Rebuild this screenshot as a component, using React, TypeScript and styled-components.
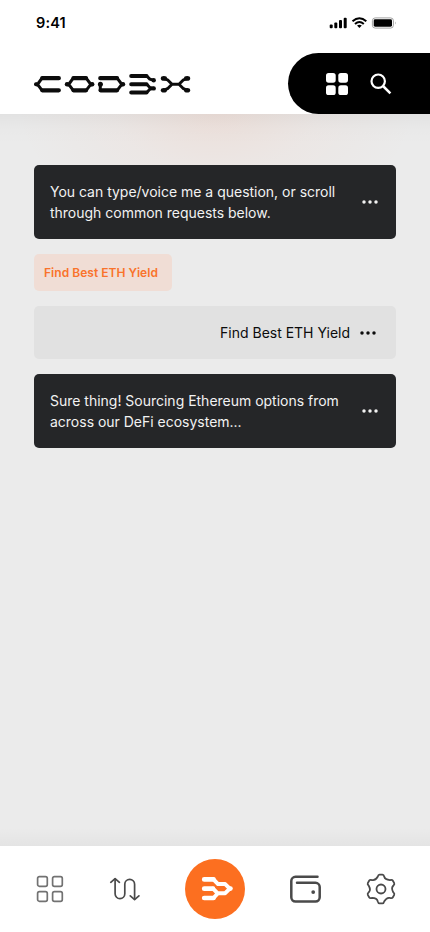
import React from "react";
import styled, { createGlobalStyle, css } from "styled-components";

const GlobalStyle = createGlobalStyle`
  *, *::before, *::after { box-sizing: border-box; }
  body { margin: 0; background: #ebebeb; font-family: Inter, "Liberation Sans", sans-serif; }
  button { border: 0; padding: 0; background: none; font: inherit; color: inherit; }
  svg { display: block; flex: none; }
`;

const Screen = styled.div`
  width: 430px;
  height: 932px;
  display: flex;
  flex-direction: column;
  overflow: hidden;
`;

const Header = styled.header`
  height: 114px;
  flex: none;
  background: #fff;
  display: flex;
  flex-direction: column;
`;

const StatusBar = styled.div`
  height: 53px;
  padding: 14px 33px 0 36px;
  display: flex;
  justify-content: space-between;
`;

const Time = styled.span`
  font-size: 14.5px;
  line-height: 18px;
  font-weight: 600;
  letter-spacing: 0.15px;
  color: #000;
`;

const Brand = styled.div`
  height: 61px;
  padding-left: 30px;
  display: flex;
  justify-content: space-between;
  align-items: center;
`;

const Actions = styled.div`
  width: 142px;
  height: 61px;
  padding-left: 38px;
  display: flex;
  align-items: center;
  gap: 22px;
  background: #000;
  border-radius: 31px 0 0 31px;
`;

const Chat = styled.main`
  flex: 1;
  padding: 51px 34px 0;
  display: flex;
  flex-direction: column;
  align-items: flex-start;
  gap: 15px;
  background:
    linear-gradient(rgba(0, 0, 0, 0.04), rgba(0, 0, 0, 0.012) 13px, transparent 30px),
    linear-gradient(transparent calc(100% - 18px), rgba(0, 0, 0, 0.03)),
    radial-gradient(ellipse 200px 120px at 216px -4px, rgba(255, 115, 60, 0.1), rgba(255, 115, 60, 0.035) 50%, transparent),
    #ebebeb;
`;

const Message = styled.article<{ $own?: boolean }>`
  width: 362px;
  height: 74px;
  padding: 0 18px 0 16px;
  display: flex;
  align-items: center;
  justify-content: space-between;
  border-radius: 5px;
  background: #252628;
  color: #f2f2f2;
  ${(p) =>
    p.$own &&
    css`
      height: 53px;
      padding-right: 20px;
      justify-content: flex-end;
      gap: 10px;
      background: #e1e1e1;
      color: #0c0c0c;
    `}
`;

const MessageText = styled.p`
  margin: 0;
  font-size: 14px;
  font-weight: 400;
  line-height: 21px;
  letter-spacing: -0.01px;
  white-space: nowrap;
`;

const Suggestion = styled.button`
  width: 138px;
  height: 37px;
  padding-left: 10px;
  text-align: left;
  border-radius: 5px;
  background: #f0ddd5;
  color: #f9732b;
  font-size: 12px;
  font-weight: 600;
  letter-spacing: 0.04px;
  white-space: nowrap;
`;

const TabBar = styled.nav`
  height: 86px;
  flex: none;
  padding: 0 33px 0 36px;
  display: flex;
  align-items: center;
  justify-content: space-between;
  background: #fff;
  color: #4a4a4a;
`;

const HomeButton = styled.button`
  width: 60px;
  height: 60px;
  display: flex;
  align-items: center;
  justify-content: center;
  padding-left: 4px;
  border-radius: 50%;
  background: #fc6f20;
`;

const StatusIcons = () => (
  <svg width="70" height="18" viewBox="327 14 70 18">
    <g fill="#000">
      <rect x="329.7" y="24.4" width="3" height="3.8" rx="1" />
      <rect x="334.3" y="22.5" width="3" height="5.7" rx="1" />
      <rect x="339" y="20" width="3" height="8.2" rx="1" />
      <rect x="343.7" y="17.7" width="3" height="10.5" rx="1" />
      <rect x="373.7" y="19.3" width="18.3" height="7.4" rx="1.4" />
      <path d="M357 25.5 359.4 28 361.8 25.5Q359.4 23.8 357 25.5Z" />
    </g>
    <g fill="none" stroke="#000" strokeWidth="2">
      <path d="M352.5 21.3Q359.4 15.3 366.3 21.3" />
      <path d="M355 24Q359.4 20 363.8 24" />
    </g>
    <rect x="372.4" y="17.9" width="21" height="10.2" rx="2.8" fill="none" stroke="#999" strokeWidth=".9" />
    <path d="M395 21.4v3.2q1.4-1.6 0-3.2" fill="#999" />
  </svg>
);

const Logo = () => (
  <svg width="165" height="28" viewBox="30 70 165 28" role="img" aria-label="Codex">
    <g fill="none" stroke="#0c0c0c" strokeLinecap="round" strokeLinejoin="round">
      <g strokeWidth="4.3">
        <path d="M42.3 78.2H58.8M42.3 90.3H58.8M73.5 78.2H86M73.5 90.3H86" />
        <path d="M100.3 78.2H117M100.6 90.3H117" />
        <path d="M131.2 76H146.5M131.2 84.3H146.5M131.2 92.5H146.5" strokeWidth="4" />
      </g>
      <g strokeWidth="3">
        <path d="M42 78.2 38.5 83 36 84.3 38.5 85.6 42 90.4" />
        <path d="M73.2 78.2 69.7 83 67 84.3 69.7 85.6 73.2 90.4" />
        <path d="M86.2 78.2 89.8 83 92.3 84.3 89.8 85.6 86.2 90.4" />
        <path d="M117.2 78.2 120.8 83 123.2 84.3 120.8 85.6 117.2 90.4" />
        <path d="M100.3 84.5V90.3" />
        <path d="M146.8 76 149.8 79.1 153.6 80.2M146.8 84.3 149.8 87.5 153.6 88.3M146.8 92.5 149.8 89.2 153.6 88.3" />
        <path d="M163.7 78.3 167.5 79.8 172 84.3 167.5 88.7 163.7 90.3M187.4 78.3 183.5 79.8 179 84.3 183.5 88.7 187.4 90.3M172 84.3H179" />
      </g>
    </g>
    <g fill="#0c0c0c">
      <circle cx="36" cy="84.3" r="2" />
      <circle cx="67" cy="84.3" r="2.2" />
      <circle cx="92.2" cy="84.3" r="2.2" />
      <circle cx="123" cy="84.3" r="2.2" />
      <circle cx="100.4" cy="84.3" r="2.5" />
      <circle cx="153.7" cy="80.2" r="2.2" />
      <circle cx="153.7" cy="88.4" r="2.2" />
      <ellipse cx="163.9" cy="78.4" rx="3.1" ry="2.3" />
      <ellipse cx="163.9" cy="90.2" rx="3.1" ry="2.3" />
      <ellipse cx="187.1" cy="78.4" rx="3.1" ry="2.3" />
      <ellipse cx="187.1" cy="90.2" rx="3.1" ry="2.3" />
    </g>
  </svg>
);

const AppsSolid = () => (
  <svg width="22" height="22" viewBox="0 0 22 22" fill="#fff">
    <rect width="9.7" height="9.7" rx="2.6" />
    <rect x="12.3" width="9.7" height="9.7" rx="2.6" />
    <rect y="12.3" width="9.7" height="9.7" rx="2.6" />
    <rect x="12.3" y="12.3" width="9.7" height="9.7" rx="2.6" />
  </svg>
);

const Search = () => (
  <svg width="22" height="22" viewBox="0 0 22 22" fill="none" stroke="#fff" strokeWidth="2.2">
    <circle cx="8.2" cy="8.2" r="6.7" />
    <path d="M13 13 20.4 20.4" strokeWidth="2.5" />
  </svg>
);

const Dots = () => (
  <svg width="16" height="4" viewBox="0 0 16 4" fill="currentColor">
    <circle cx="2" cy="2" r="1.75" />
    <circle cx="8" cy="2" r="1.75" />
    <circle cx="14" cy="2" r="1.75" />
  </svg>
);

const AppsOutline = () => (
  <svg width="28" height="28" viewBox="0 0 28 28" fill="none" stroke="#727272" strokeWidth="1.7">
    <rect x="1.6" y="1.6" width="9.7" height="9.7" rx="1.8" />
    <rect x="16.6" y="1.6" width="9.7" height="9.7" rx="1.8" />
    <rect x="1.6" y="16.6" width="9.7" height="9.7" rx="1.8" />
    <rect x="16.6" y="16.6" width="9.7" height="9.7" rx="1.8" />
  </svg>
);

const Swap = () => (
  <svg width="32" height="26" viewBox="108.2 876 32 26" fill="none" stroke="currentColor" strokeWidth="1.7" strokeLinecap="round" strokeLinejoin="round">
    <path d="M115.3 879V893.8a4.85 4.85 0 0 0 9.7 0V884.2a4.9 4.9 0 0 1 9.8 0V899" />
    <path d="M111 882.3 115.3 878.6 119.6 882.3M130.5 895.9 134.8 899.6 139.1 895.9" />
  </svg>
);

const BrandMark = () => (
  <svg width="34" height="26" viewBox="200 876 34 26" fill="none" stroke="#fff" strokeLinecap="round" strokeLinejoin="round">
    <path d="M204.2 879.4H213.5M204.2 888.7H213M204.2 898H213.5" strokeWidth="4.7" />
    <path d="M213.5 879.4 218 884.1H225.2L229.8 888.6 225.2 893.2H218L213.5 898M213 888.7 217.5 893.2" strokeWidth="4" />
    <circle cx="230.4" cy="888.6" r="2.4" fill="#fff" stroke="none" />
  </svg>
);

const Wallet = () => (
  <svg width="32" height="28" viewBox="289 875 32 28" fill="none" stroke="currentColor" strokeWidth="2.5" strokeLinecap="round">
    <path d="M317.5 876.8H295.5a4.2 4.2 0 0 0-4.2 4.2V897.3a4.2 4.2 0 0 0 4.2 4.2H315.5a4.2 4.2 0 0 0 4.2-4.2V887a4.2 4.2 0 0 0-4.2-4.2H297" />
    <circle cx="313.2" cy="892.1" r="1.9" fill="currentColor" stroke="none" />
  </svg>
);

/* One tooth and the valley after it, repeated every 60 degrees. */
const toothPoints: [number, number][] = [
  [-3.3, -12.2], [-2.7, -14.4], [-1.5, -14.4],
  [1.5, -14.4], [2.7, -14.4], [3.3, -12.2],
  [4, -9.2], [5.2, -8.4], [7.9, -9],
];

const rotated = ([x, y]: [number, number], step: number) => {
  const a = (step * Math.PI) / 3;
  return `${(x * Math.cos(a) - y * Math.sin(a)).toFixed(2)} ${(x * Math.sin(a) + y * Math.cos(a)).toFixed(2)}`;
};

const gearPath = () => {
  let d = `M${rotated(toothPoints[0], 0)}`;
  for (let k = 0; k < 6; k++) {
    const [, b, c, e, f, g, h, , j] = toothPoints.map((p) => rotated(p, k));
    d += `Q${b} ${c}L${e}Q${f} ${g}C${h} ${j} ${rotated(toothPoints[0], k + 1)}`;
  }
  return d + "Z";
};

const Gear = () => (
  <svg width="32" height="32" viewBox="-16 -16 32 32" fill="none" stroke="currentColor" strokeWidth="1.8" strokeLinejoin="round">
    <path d={gearPath()} />
    <circle r="4.5" />
  </svg>
);

export default function App() {
  return (
    <>
      <GlobalStyle />
      <Screen>
        <Header>
          <StatusBar>
            <Time>9:41</Time>
            <StatusIcons />
          </StatusBar>
          <Brand>
            <Logo />
            <Actions>
              <button aria-label="Apps"><AppsSolid /></button>
              <button aria-label="Search"><Search /></button>
            </Actions>
          </Brand>
        </Header>
        <Chat>
          <Message>
            <MessageText>You can type/voice me a question, or scroll<br />through common requests below.</MessageText>
            <Dots />
          </Message>
          <Suggestion>Find Best ETH Yield</Suggestion>
          <Message $own>
            <MessageText>Find Best ETH Yield</MessageText>
            <Dots />
          </Message>
          <Message>
            <MessageText>Sure thing! Sourcing Ethereum options from<br />across our DeFi ecosystem...</MessageText>
            <Dots />
          </Message>
        </Chat>
        <TabBar>
          <button aria-label="Dashboard"><AppsOutline /></button>
          <button aria-label="Swap"><Swap /></button>
          <HomeButton aria-label="Assistant"><BrandMark /></HomeButton>
          <button aria-label="Wallet"><Wallet /></button>
          <button aria-label="Settings"><Gear /></button>
        </TabBar>
      </Screen>
    </>
  );
}
